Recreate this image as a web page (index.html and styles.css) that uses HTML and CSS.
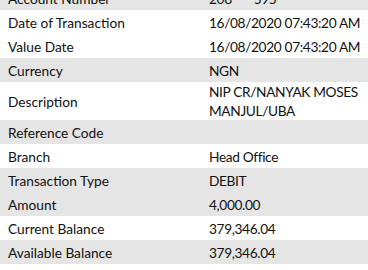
FILE: index.html
```html
<!DOCTYPE html>
<html>
<head>
<meta charset="utf-8">
<link rel="stylesheet" href="styles.css">
</head>
<body>
<table class="details">
  <colgroup><col class="col-label"><col class="col-value"></colgroup>
  <tr class="shade"><td class="label">Account Number</td><td class="value">208****595</td></tr>
  <tr><td class="label">Date of Transaction</td><td class="value">16/08/2020 07:43:20 AM</td></tr>
  <tr><td class="label">Value Date</td><td class="value">16/08/2020 07:43:20 AM</td></tr>
  <tr class="shade"><td class="label">Currency</td><td class="value">NGN</td></tr>
  <tr><td class="label">Description</td><td class="value">NIP CR/NANYAK MOSES<br>MANJUL/UBA</td></tr>
  <tr class="shade"><td class="label">Reference Code</td><td class="value"></td></tr>
  <tr><td class="label">Branch</td><td class="value">Head Office</td></tr>
  <tr class="shade"><td class="label">Transaction Type</td><td class="value">DEBIT</td></tr>
  <tr class="shade"><td class="label">Amount</td><td class="value">4,000.00</td></tr>
  <tr><td class="label">Current Balance</td><td class="value">379,346.04</td></tr>
  <tr class="shade"><td class="label">Available Balance</td><td class="value">379,346.04</td></tr>
</table>
</body>
</html>
```
FILE: styles.css
```css
html, body {
  margin: 0;
  padding: 0;
  background: #ffffff;
}
body {
  font-family: Lato, "Open Sans", sans-serif;
  font-size: 13.7px;
  color: #111111;
}
.details {
  border-collapse: collapse;
  table-layout: fixed;
  width: 368px;
  margin-top: -14px;
}
.col-label {
  width: 201px;
}
.col-value {
  width: 167px;
}
.details td {
  height: 24px;
  padding: 0 0 0 8px;
  line-height: 19px;
  vertical-align: middle;
  white-space: nowrap;
  overflow: visible;
}
.details .value {
  letter-spacing: -0.35px;
}
.shade td {
  background: #e5e5e5;
}
```
